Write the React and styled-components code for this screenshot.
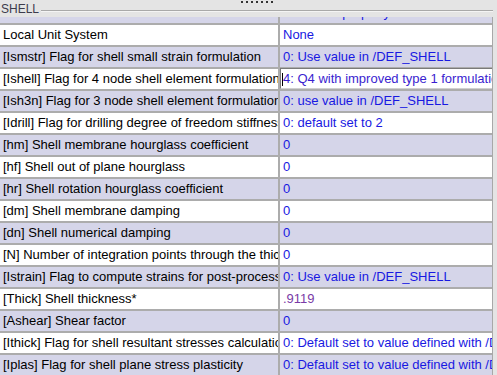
import React from "react";
import styled, { createGlobalStyle } from "styled-components";

const GlobalStyle = createGlobalStyle`
  html, body {
    margin: 0;
    padding: 0;
    background: #e4e4e4;
    font-family: "Liberation Sans", Arial, sans-serif;
    font-size: 13px;
    overflow: hidden;
  }
`;

const Page = styled.div`
  width: 497px;
  height: 375px;
  overflow: hidden;
`;

const Header = styled.div`
  position: relative;
  height: 17px;
  display: flex;
  align-items: flex-start;
  width: 493px;
`;

const Title = styled.span`
  padding: 2px 0 0 1px;
  line-height: 14px;
  font-size: 12px;
  color: #3c3c4c;
`;

const Rule = styled.div`
  flex: 1;
  margin: 10px 0 0 2px;
  border-top: 1px solid #a9a9a9;
  border-bottom: 1px solid #f4f4f4;
`;

const Grip = styled.svg`
  position: absolute;
  top: 1px;
  left: 240px;
`;

const Grid = styled.div`
  width: 492px;
  border-right: 1px solid #a8a8a8;
`;

const Clip = styled.div`
  height: 6px;
  overflow: hidden;
  display: flex;
  flex-direction: column;
  justify-content: flex-end;
  border-bottom: 2px solid #acacac;
`;

const Row = styled.div`
  display: grid;
  grid-template-columns: 280px 1fr;
  height: 20px;
  flex: none;
  background: ${(p) => (p.$alt ? "#d5d5e9" : "#ffffff")};
  border-bottom: ${(p) => (p.$last ? "none" : "2px solid #acacac")};
`;

const Label = styled.div`
  border-right: 2px solid #acacac;
  padding-left: 3px;
  line-height: 20px;
  color: #000;
  white-space: nowrap;
  overflow: hidden;
`;

const Value = styled.div`
  position: relative;
  padding-left: 3px;
  line-height: 20px;
  color: ${(p) => p.$color || "#1818e2"};
  white-space: nowrap;
  overflow: hidden;
`;

const Editor = styled.div`
  position: relative;
  margin-top: -1px;
  height: 21px;
  box-sizing: border-box;
  background: #fff;
  border-top: 1px solid #7a7a7a;
  border-left: 1px solid #7a7a7a;
  border-bottom: 1px solid #d0d0d0;
  padding-left: 2px;
  line-height: 20px;
  color: #3a1ed0;
  white-space: nowrap;
  overflow: hidden;
`;

const Caret = styled.span`
  position: absolute;
  left: 1px;
  top: 4px;
  width: 1px;
  height: 13px;
  background: #000;
`;

const rows = [
  { label: "Local Unit System", value: "None" },
  { label: "[Ismstr] Flag for shell small strain formulation", value: "0: Use value in /DEF_SHELL" },
  { label: "[Ishell] Flag for 4 node shell element formulation", value: "4: Q4 with improved type 1 formulation", editing: true },
  { label: "[Ish3n] Flag for 3 node shell element formulation", value: "0: use value in /DEF_SHELL" },
  { label: "[Idrill] Flag for drilling degree of freedom stiffness", value: "0: default set to 2" },
  { label: "[hm] Shell membrane hourglass coefficient", value: "0" },
  { label: "[hf] Shell out of plane hourglass", value: "0" },
  { label: "[hr] Shell rotation hourglass coefficient", value: "0" },
  { label: "[dm] Shell membrane damping", value: "0" },
  { label: "[dn] Shell numerical damping", value: "0" },
  { label: "[N] Number of integration points through the thickness", value: "0" },
  { label: "[Istrain] Flag to compute strains for post-processing", value: "0: Use value in /DEF_SHELL" },
  { label: "[Thick] Shell thickness*", value: ".9119", color: "#7a3aa6" },
  { label: "[Ashear] Shear factor", value: "0" },
  { label: "[Ithick] Flag for shell resultant stresses calculation", value: "0: Default set to value defined with /DEF_SHELL" },
  { label: "[Iplas] Flag for shell plane stress plasticity", value: "0: Default set to value defined with /DEF_SHELL" },
];

export default function App() {
  return (
    <Page>
      <GlobalStyle />
      <Header>
        <Title>SHELL</Title>
        <Rule />
        <Grip width="36" height="2" viewBox="0 0 36 2">
          {[0, 1, 2, 3, 4, 5, 6].map((i) => (
            <rect key={i} x={1 + i * 5} y="0" width="2" height="2" fill="#333" />
          ))}
        </Grip>
      </Header>
      <Grid>
        <Clip>
          <Row $alt $last>
            <Label></Label>
            <Value>0: Default property</Value>
          </Row>
        </Clip>
        {rows.map((r, i) => (
          <Row key={r.label} $alt={i % 2 === 1}>
            <Label>{r.label}</Label>
            {r.editing ? (
              <Editor>
                <Caret />
                {r.value}
              </Editor>
            ) : (
              <Value $color={r.color}>{r.value}</Value>
            )}
          </Row>
        ))}
      </Grid>
    </Page>
  );
}
